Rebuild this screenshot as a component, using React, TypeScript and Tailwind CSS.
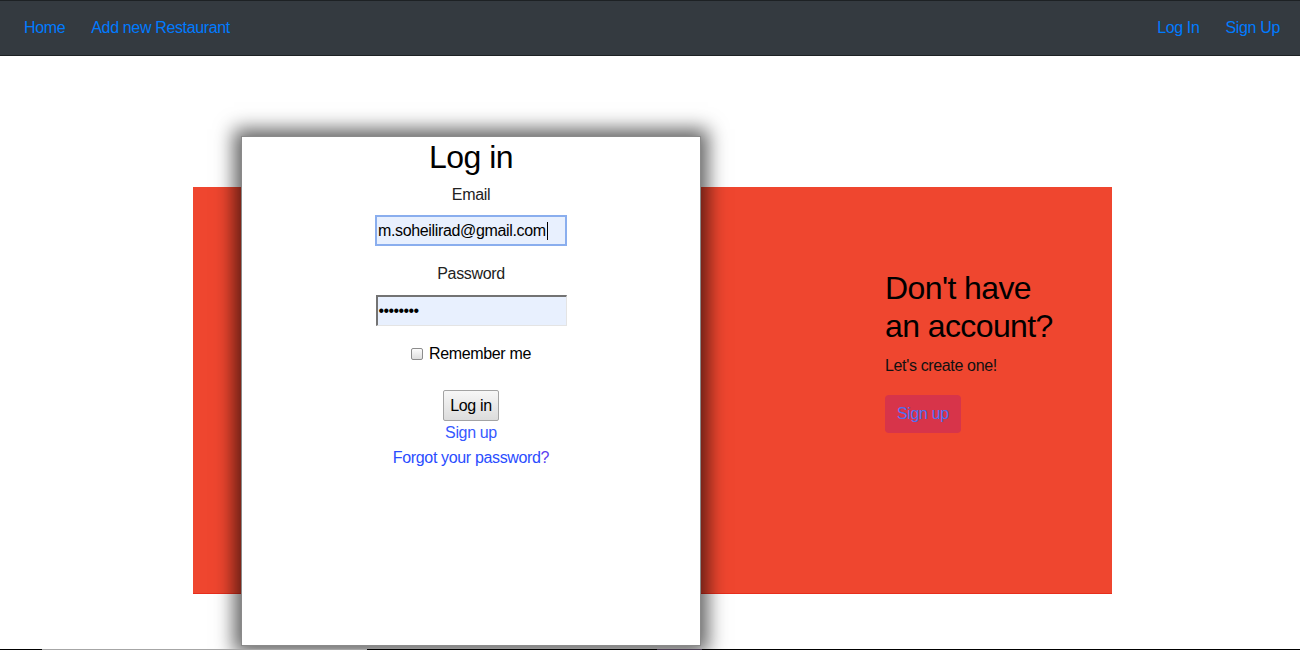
export default function App() {
  return (
    <div className="h-[650px] flex flex-col bg-white overflow-hidden font-['Liberation_Sans',Arial,sans-serif] text-[16px] tracking-[-0.35px] text-black">
      {/* Top navbar */}
      <nav className="h-[56px] shrink-0 bg-[#343a40] border-t border-b border-[#1d2124] flex items-center justify-between pl-[24px] pr-[20px]">
        <div className="flex items-center gap-[26px]">
          <a className="text-[#007bff]">Home</a>
          <a className="text-[#007bff]">Add new Restaurant</a>
        </div>
        <div className="flex items-center gap-[26px]">
          <a className="text-[#007bff]">Log In</a>
          <a className="text-[#007bff]">Sign Up</a>
        </div>
      </nav>

      {/* Main */}
      <main className="flex-1">
        <div className="mt-[131px] ml-[193px] w-[919px] h-[407px] bg-[#ef462f] border-b border-[#e72e1d] flex items-start">
          {/* Login card */}
          <div className="ml-[48px] -mt-[51px] w-[460px] h-[510px] shrink-0 bg-white border border-[#8a8a8a] shadow-[0_0_18px_7px_rgba(0,0,0,0.62)] flex flex-col items-center">
            <h1 className="text-[32px] leading-[40px] tracking-[-0.5px]">Log in</h1>
            <label className="mt-[6px] leading-[24px] text-[#222]">Email</label>
            <div className="mt-[8px] w-[192px] h-[31px] bg-[#e8f0fe] border-2 border-[#8aaeee] flex items-center pl-[1px] text-[16px] text-black">
              <span>m.soheilirad@gmail.com</span>
              <span className="ml-[1px] w-px h-[18px] bg-black" />
            </div>
            <label className="mt-[16px] leading-[24px] text-[#222]">Password</label>
            <div className="mt-[9px] w-[191px] h-[31px] bg-[#e8f0fe] border-t-2 border-l-2 border-[#737373] border-r border-b border-r-[#e4e4e4] border-b-[#e4e4e4] flex items-center pl-[1px] text-[16px] tracking-[-0.6px]">
              ••••••••
            </div>
            <div className="mt-[16px] h-[24px] flex items-center gap-[6px]">
              <span className="w-[12px] h-[12px] rounded-[2px] border border-[#8c8c8c] bg-gradient-to-b from-[#fcfcfc] to-[#dedede]" />
              <span>Remember me</span>
            </div>
            <button className="mt-[24px] h-[31px] px-[6px] border border-[#a3a3a3] rounded-[2px] bg-gradient-to-b from-[#f7f7f7] to-[#dcdcdc] text-black leading-none">
              Log in
            </button>
            <a className="leading-[23px] text-[#3759ff]">Sign up</a>
            <a className="mt-[2px] leading-[23px] text-[#2a4dff]">
              Forgot your password<span className="text-[#5b3ff0]">?</span>
            </a>
          </div>

          {/* Sign-up pitch */}
          <div className="ml-[184px] mt-[82px] flex flex-col items-start">
            <h2 className="text-[32px] leading-[1.2] tracking-[-0.6px] text-black">
              Don't have
              <br />
              an account?
            </h2>
            <p className="mt-[8px] leading-[24px] text-[#111]">Let's create one!</p>
            <button className="mt-[17px] h-[38px] px-[12px] rounded-[4px] bg-[#d7344a] text-[#4e6ff2]">
              Sign up
            </button>
          </div>
        </div>
      </main>

      {/* bottom strip */}
      <div className="h-px shrink-0 bg-black flex">
        <div className="ml-[42px] w-[325px] bg-[#a6a6a6]" />
        <div className="ml-[290px] w-[45px] bg-[#4a3d52]" />
      </div>
    </div>
  );
}
